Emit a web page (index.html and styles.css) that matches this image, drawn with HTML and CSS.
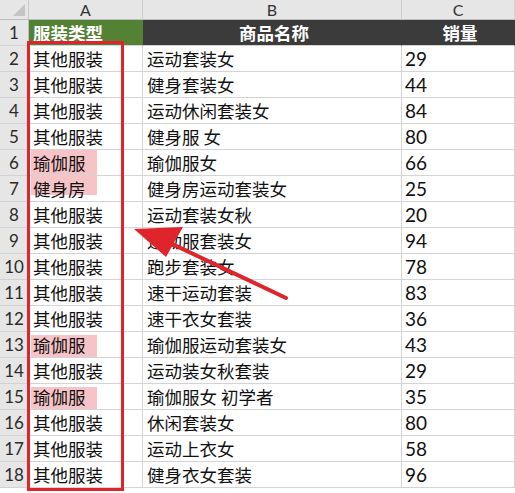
FILE: index.html
```html
<!DOCTYPE html>
<html lang="zh">
<head>
<meta charset="utf-8">
<link rel="stylesheet" href="styles.css">
</head>
<body>
<div class="sheet">
  <div class="grid">
    <div class="corner"><span class="tri"></span></div>
    <div class="colhead">A</div>
    <div class="colhead">B</div>
    <div class="colhead">C</div>

    <div class="rowhead">1</div>
    <div class="cell h-green">服装类型</div>
    <div class="cell h-dark center">商品名称</div>
    <div class="cell h-dark center">销量</div>

    <div class="rowhead">2</div><div class="cell">其他服装</div><div class="cell">运动套装女</div><div class="cell num">29</div>
    <div class="rowhead">3</div><div class="cell">其他服装</div><div class="cell">健身套装女</div><div class="cell num">44</div>
    <div class="rowhead">4</div><div class="cell">其他服装</div><div class="cell">运动休闲套装女</div><div class="cell num">84</div>
    <div class="rowhead">5</div><div class="cell">其他服装</div><div class="cell">健身服 女</div><div class="cell num">80</div>
    <div class="rowhead">6</div><div class="cell"><span class="pink">瑜伽服</span></div><div class="cell">瑜伽服女</div><div class="cell num">66</div>
    <div class="rowhead">7</div><div class="cell"><span class="pink pink-bottom">健身房</span></div><div class="cell">健身房运动套装女</div><div class="cell num">25</div>
    <div class="rowhead">8</div><div class="cell">其他服装</div><div class="cell">运动套装女秋</div><div class="cell num">20</div>
    <div class="rowhead">9</div><div class="cell">其他服装</div><div class="cell">运动服套装女</div><div class="cell num">94</div>
    <div class="rowhead">10</div><div class="cell">其他服装</div><div class="cell">跑步套装女</div><div class="cell num">78</div>
    <div class="rowhead">11</div><div class="cell">其他服装</div><div class="cell">速干运动套装</div><div class="cell num">83</div>
    <div class="rowhead">12</div><div class="cell">其他服装</div><div class="cell">速干衣女套装</div><div class="cell num">36</div>
    <div class="rowhead">13</div><div class="cell"><span class="pink pink-short">瑜伽服</span></div><div class="cell">瑜伽服运动套装女</div><div class="cell num">43</div>
    <div class="rowhead">14</div><div class="cell">其他服装</div><div class="cell">运动装女秋套装</div><div class="cell num">29</div>
    <div class="rowhead">15</div><div class="cell"><span class="pink pink-short">瑜伽服</span></div><div class="cell">瑜伽服女 初学者</div><div class="cell num">35</div>
    <div class="rowhead">16</div><div class="cell">其他服装</div><div class="cell">休闲套装女</div><div class="cell num">80</div>
    <div class="rowhead">17</div><div class="cell">其他服装</div><div class="cell">运动上衣女</div><div class="cell num">58</div>
    <div class="rowhead">18</div><div class="cell">其他服装</div><div class="cell">健身衣女套装</div><div class="cell num">96</div>
  </div>
  <div class="redbox"></div>
  <svg class="arrow" width="515" height="493" viewBox="0 0 515 493">
    <line x1="286" y1="298" x2="170" y2="243" stroke="#e0242c" stroke-width="4" stroke-linecap="round"/>
    <polygon points="134,229 183,227 166,257" fill="#e0242c"/>
  </svg>
</div>
</body>
</html>
```

FILE: styles.css
```css
* { box-sizing: border-box; }
html, body { margin: 0; padding: 0; background: #ffffff; }
.sheet {
  position: relative;
  width: 515px;
  height: 493px;
  overflow: hidden;
  font-family: "Noto Sans CJK SC", "Noto Sans", sans-serif;
}
.grid {
  display: grid;
  grid-template-columns: 29px 114px 259px 113px;
  grid-template-rows: 20px repeat(18, 26px);
}
.corner {
  background: #e6e6e6;
  border-right: 1px solid #c8c8c8;
  border-bottom: 1px solid #bdbdbd;
  position: relative;
}
.tri {
  position: absolute;
  right: 3px;
  bottom: 3px;
  width: 0;
  height: 0;
  border-left: 12px solid transparent;
  border-bottom: 12px solid #c4c4c4;
}
.colhead {
  background: #e6e6e6;
  border-right: 1px solid #cfcfcf;
  border-bottom: 1px solid #bdbdbd;
  text-align: center;
  font-family: "Lato", "Open Sans", sans-serif;
  font-size: 16px;
  line-height: 19px;
  color: #333333;
}
.rowhead {
  background: #e6e6e6;
  border-right: 1px solid #bdbdbd;
  border-bottom: 1px solid #d2d2d2;
  text-align: center;
  font-family: "Lato", "Open Sans", sans-serif;
  font-size: 17px;
  line-height: 25px;
  color: #2b2b2b;
}
.cell {
  border-right: 1px solid #d4d4d4;
  border-bottom: 1px solid #d4d4d4;
  padding-left: 4px;
  font-size: 17.5px;
  line-height: 25px;
  color: #111111;
  white-space: nowrap;
  overflow: hidden;
}
.num {
  font-family: "Lato", "Open Sans", sans-serif;
  font-size: 19px;
  padding-left: 3px;
}
.h-green {
  background: #548235;
  color: #ffffff;
  font-weight: bold;
  border-right-color: #548235;
}
.h-dark {
  background: #3b3b3b;
  color: #ffffff;
  font-weight: bold;
  border-right-color: #3b3b3b;
}
.center { text-align: center; }
.pink {
  display: block;
  width: 66px;
  margin-left: -2px;
  padding-left: 2px;
  height: 25px;
  background: #f6c3c6;
}
.pink-bottom {
  background: linear-gradient(#f6c3c6 0 19px, transparent 19px);
}
.pink-short {
  background: linear-gradient(transparent 0 3px, #f6c3c6 3px);
}
.redbox {
  position: absolute;
  left: 27px;
  top: 41px;
  width: 97px;
  height: 450px;
  border: 3px solid #e0242c;
}
.arrow {
  position: absolute;
  left: 0;
  top: 0;
}
```
